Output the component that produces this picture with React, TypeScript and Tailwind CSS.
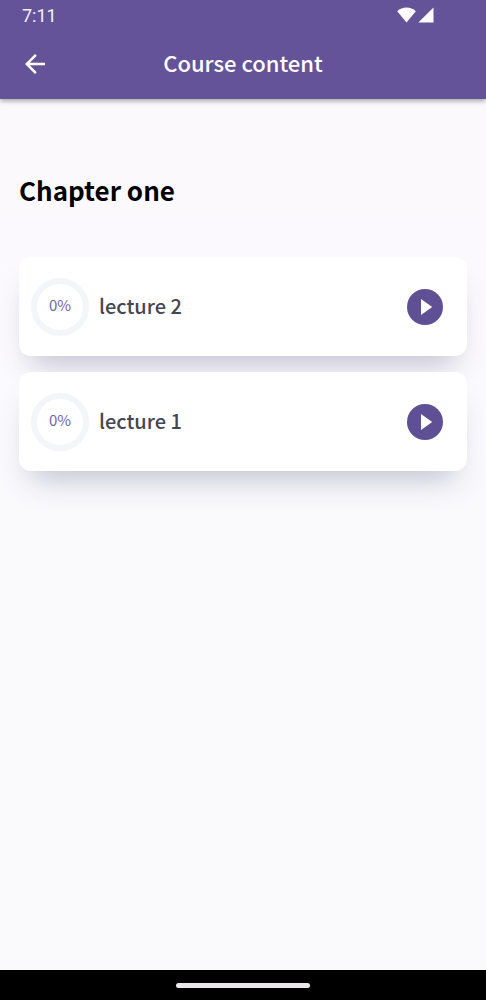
type Lecture = { title: string; progress: number };

const lectures: Lecture[] = [
  { title: "lecture 2", progress: 0 },
  { title: "lecture 1", progress: 0 },
];

function StatusBar() {
  return (
    <div className="flex h-8 items-center justify-between pr-[52px] pl-[22px] font-[Roboto,sans-serif] text-lg leading-8 text-[#f3effb]">
      <span>7:11</span>
      <span className="flex items-center gap-0.5 pb-0.5 text-[#fdfbff]">
        <svg width="19" height="16" viewBox="0 0 19 16" fill="currentColor" aria-hidden="true">
          <path d="M9.500 15.500 0.200 4.300C2.800 1.900 6 .6 9.500.6s6.700 1.300 9.300 3.700z" />
        </svg>
        <svg width="16" height="16" viewBox="0 0 16 16" fill="currentColor" aria-hidden="true">
          <path d="M0.300 15.500H15.500V.5z" />
        </svg>
      </span>
    </div>
  );
}

function ProgressRing({ value }: { value: number }) {
  const length = 2 * Math.PI * 26;
  return (
    <div className="grid size-[58px] shrink-0 place-items-center">
      <svg className="col-start-1 row-start-1 size-full -rotate-90" viewBox="0 0 58 58" fill="none" aria-hidden="true">
        <circle cx="29" cy="29" r="26" stroke="#f4f5f8" strokeWidth="6" />
        {value > 0 && (
          <circle
            cx="29"
            cy="29"
            r="26"
            stroke="#655399"
            strokeWidth="6"
            strokeDasharray={`${(length * value) / 100} ${length}`}
          />
        )}
      </svg>
      <span className="col-start-1 row-start-1 pb-1 text-[15px] leading-5 text-[#7365a3]">{value}%</span>
    </div>
  );
}

function LectureCard({ lecture }: { lecture: Lecture }) {
  return (
    <li className="flex h-[99px] items-center rounded-xl bg-white pr-6 pl-3 shadow-[0_20px_30px_-12px_rgba(70,70,115,0.32)]">
      <ProgressRing value={lecture.progress} />
      <h3 className="ml-2.5 flex-1 pb-0.5 text-xl leading-7 font-medium text-[#45464f]">{lecture.title}</h3>
      <button type="button" aria-label={`Play ${lecture.title}`} className="size-9 shrink-0 rounded-full bg-[#5f5096] text-white">
        <svg className="size-9" viewBox="0 0 36 36" fill="currentColor" aria-hidden="true">
          <path d="M14 10v16l11.200-8z" />
        </svg>
      </button>
    </li>
  );
}

export default function App() {
  return (
    <div className="flex min-h-screen flex-col bg-linear-to-b from-[#fcf9fd] from-20% to-[#fafafd] to-50% font-['Noto_Sans_CJK_SC',sans-serif]">
      <header className="bg-[#655399] shadow-[0_2px_5px_rgba(0,0,0,0.35)]">
        <StatusBar />
        <div className="grid h-[67px] grid-cols-[48px_1fr_48px] items-center px-[11px] pb-1 text-white">
          <button type="button" aria-label="Back" className="grid size-12 place-items-center">
            <svg className="size-[30px]" viewBox="0 0 24 24" fill="currentColor" aria-hidden="true">
              <path d="M20 11H7.830l5.590-5.590L12 4l-8 8 8 8 1.410-1.410L7.830 13H20z" />
            </svg>
          </button>
          <h1 className="pb-1 text-center text-[22px] leading-8 font-medium">Course content</h1>
        </div>
      </header>
      <main className="flex-1 px-[19px] pt-[71px]">
        <h2 className="text-[26px] leading-10 font-bold text-black">Chapter one</h2>
        <ul className="mt-[47px] flex flex-col gap-4">
          {lectures.map((lecture) => (
            <LectureCard key={lecture.title} lecture={lecture} />
          ))}
        </ul>
      </main>
      <footer className="flex h-[30px] items-center justify-center bg-black">
        <div className="h-[5px] w-[134px] rounded-full bg-[#e9e6ec]" />
      </footer>
    </div>
  );
}
